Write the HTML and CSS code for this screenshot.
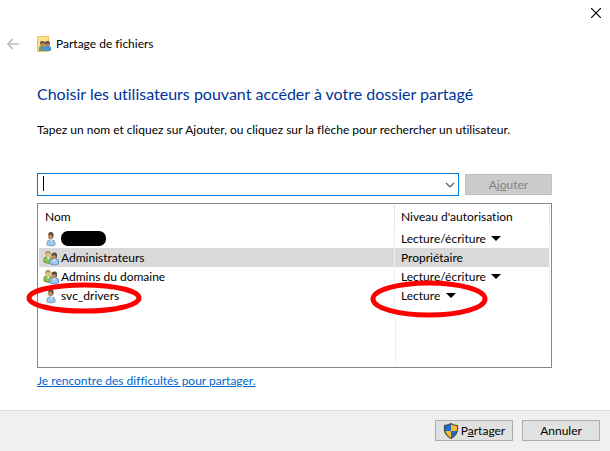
FILE: index.html
```html
<!DOCTYPE html>
<html lang="fr">
<head>
<meta charset="utf-8">
<title>Partage de fichiers</title>
<link rel="stylesheet" href="styles.css">
</head>
<body>
<svg class="symbols" aria-hidden="true">
  <symbol id="user" viewBox="0 0 16 16">
    <path d="M4 14V12Q4 9 7 9H9Q12 9 12 12V14Q8 16 4 14Z" fill="#a3c8ea" stroke="#7ba5cd"/>
    <path d="M7 8L8 11L10 8Z" fill="#eef6fc"/>
    <ellipse cx="7.500" cy="5" rx="2.500" ry="3.500" fill="#b98c66"/>
    <path d="M5.500 4Q5 1 8 1Q11 1 10.500 5.500L9.500 8Q9.500 4 8 3.500Z" fill="#5b4c40"/>
  </symbol>
  <symbol id="group" viewBox="0 0 16 16">
    <path d="M1 12V9Q1 7 3 7H7Q9 7 9 9V13Q4 14 1 12Z" fill="#8cc255" stroke="#5f9a3c"/>
    <path d="M4 7L5 10L7 7Z" fill="#edf5df"/>
    <ellipse cx="5" cy="4.500" rx="2.500" ry="3" fill="#e3bd83"/>
    <path d="M2 5Q2 1 5 1Q8 1 8 5L6.500 3L4 3Z" fill="#b4924a"/>
    <path d="M7 14V11Q7 9 9 9H13Q15.500 9 15.500 11V14Q11 16 7 14Z" fill="#9cc8ee" stroke="#6497c9"/>
    <path d="M10 9L11 12L13 9Z" fill="#eef6fc"/>
    <ellipse cx="11" cy="6.500" rx="2.500" ry="3" fill="#bb8b62"/>
    <path d="M8.500 6Q8 2.500 11.500 2.500Q14.500 2.500 14 6.500L13 9Q13 5.500 11.500 5Z" fill="#554a40"/>
  </symbol>
  <symbol id="arrow" viewBox="0 0 10 5">
    <path d="M0 0H10L5 5Z" fill="#000"/>
  </symbol>
</svg>

<main class="window">
  <div class="caption">
    <button class="close" type="button" aria-label="Fermer">
      <svg width="10" height="10" viewBox="0 0 10 10"><path d="M0 0L10 10M10 0L0 10" stroke="#000" stroke-width="1.200"/></svg>
    </button>
  </div>

  <header class="header">
    <button class="back" type="button" aria-label="Retour" disabled>
      <svg width="12" height="12" viewBox="0 0 12 12"><path d="M12 6H1M6 1L1 6L6 11" fill="none" stroke="#bdbdbd" stroke-width="1.700"/></svg>
    </button>
    <svg class="app-icon" width="16" height="16" viewBox="0 0 16 16" aria-hidden="true">
      <path d="M.5.5H11.500V15.500H.5Z" fill="#fbe18b" stroke="#e7c65a"/>
      <path d="M2 15V12Q2 10 4 10H7Q9 10 9 12V15Z" fill="#5d9a78"/>
      <circle cx="5.500" cy="8" r="2.500" fill="#bd8b50"/>
      <path d="M3 8Q2.500 5 5.500 5Q8 5 8 8L6 7Z" fill="#675637"/>
      <path d="M7 15V12Q7 10 9 10H12Q14 10 14 12V15Z" fill="#4b94d0"/>
      <circle cx="10.500" cy="8" r="2.500" fill="#ad7954"/>
      <path d="M8 8Q7.500 5 10.500 5Q13 5 13 8L11 7Z" fill="#51483d"/>
    </svg>
    <span>Partage de fichiers</span>
  </header>

  <section class="content">
    <h1>Choisir les utilisateurs pouvant accéder à votre dossier partagé</h1>
    <label class="hint" for="account">Tapez un nom et cliquez sur Ajouter, ou cliquez sur la flèche pour rechercher un utilisateur.</label>

    <div class="add-row">
      <div class="combo">
        <input id="account" type="text" autocomplete="off">
        <span class="caret"></span>
        <button type="button" aria-label="Afficher la liste">
          <svg width="10" height="6" viewBox="0 0 10 6"><path d="M1 1L5 5L9 1" fill="none" stroke="#555" stroke-width="1.200"/></svg>
        </button>
      </div>
      <button class="button add" type="button" disabled><span>Aj<u>o</u>uter</span></button>
    </div>

    <div class="list">
      <table>
        <thead>
          <tr><th scope="col">Nom</th><th class="level" scope="col">Niveau d'autorisation</th></tr>
        </thead>
        <tbody>
          <tr>
            <td><div class="cell"><svg class="icon"><use href="#user"/></svg><span class="redacted"></span></div></td>
            <td><div class="cell"><select aria-label="Niveau d'autorisation"><option>Lecture/écriture</option></select><svg class="arrow"><use href="#arrow"/></svg></div></td>
          </tr>
          <tr class="selected">
            <td><div class="cell"><svg class="icon"><use href="#group"/></svg><span>Administrateurs</span></div></td>
            <td><div class="cell">Propriétaire</div></td>
          </tr>
          <tr>
            <td><div class="cell"><svg class="icon"><use href="#group"/></svg><span>Admins du domaine</span></div></td>
            <td><div class="cell"><select aria-label="Niveau d'autorisation pour Admins du domaine"><option>Lecture/écriture</option></select><svg class="arrow"><use href="#arrow"/></svg></div></td>
          </tr>
          <tr>
            <td><div class="cell"><svg class="icon"><use href="#user"/></svg><span>svc_drivers</span>
              <svg class="mark mark-name" viewBox="0 0 116 32" aria-hidden="true"><ellipse cx="58" cy="16" rx="55" ry="13"/></svg></div></td>
            <td><div class="cell"><select aria-label="Niveau d'autorisation pour svc_drivers"><option>Lecture</option></select><svg class="arrow"><use href="#arrow"/></svg>
              <svg class="mark mark-level" viewBox="0 0 118 38" aria-hidden="true"><ellipse cx="59" cy="19" rx="56" ry="16"/></svg></div></td>
          </tr>
        </tbody>
      </table>
      <div class="list-rest"></div>
    </div>

    <a class="help" href="#">Je rencontre des difficultés pour partager.</a>
  </section>

  <footer class="footer">
    <button class="button" type="button">
      <svg width="16" height="16" viewBox="0 0 16 16" aria-hidden="true">
        <path d="M8 0Q5 2 1 2V7Q2 13 8 16Z" fill="#1770cc"/>
        <path d="M8 0Q11 2 15 2V7Q14 13 8 16Z" fill="#fdb92c"/>
        <path d="M1.500 8H8V16Q3 13 1.500 8Z" fill="#fdb92c"/>
        <path d="M14.500 8H8V16Q13 13 14.500 8Z" fill="#1770cc"/>
        <path d="M8 .8Q5 2.500 1.500 2.500V7Q2.500 12.500 8 15.300Q13.500 12.500 14.500 7V2.500Q11 2.500 8 .8Z" fill="none" stroke="#4b4b4b" stroke-width="1.200"/>
      </svg>
      <span>P<u>a</u>rtager</span>
    </button>
    <button class="button" type="button">Annuler</button>
  </footer>
</main>
</body>
</html>
```

FILE: styles.css
```css
* {
  box-sizing: border-box;
}

body {
  margin: 0;
  background: #fff;
  color: #000;
  font: 12px/16px "Segoe UI", Lato, "Open Sans", sans-serif;
  font-variant-ligatures: none;
}

button,
input,
select {
  margin: 0;
  padding: 0;
  border: 0;
  background: none;
  color: inherit;
  font: inherit;
}

svg {
  display: block;
  flex: none;
}

.symbols {
  position: absolute;
  width: 0;
  height: 0;
}

.window {
  display: flex;
  flex-direction: column;
  min-height: 100vh;
}

.caption {
  display: flex;
  justify-content: flex-end;
  padding: 8px 9px 0 0;
}

.close {
  display: flex;
}

.header {
  display: flex;
  align-items: center;
  margin-top: 18px;
  padding-left: 7px;
}

.back {
  display: flex;
  margin-right: 18px;
}

.app-icon {
  margin-right: 3px;
}

.content {
  display: flex;
  flex-direction: column;
  flex: 1;
  padding: 32px 58px 20px 37px;
}

h1 {
  margin: 0;
  color: #003399;
  font-size: 16px;
  font-weight: 400;
  line-height: 20px;
  white-space: nowrap;
}

.hint {
  margin-top: 18px;
  white-space: nowrap;
}

.add-row {
  display: flex;
  align-items: center;
  gap: 6px;
  margin-top: 35px;
}

.combo {
  position: relative;
  display: flex;
  flex: 1;
  height: 23px;
  border: 1px solid #0078d7;
}

.combo input {
  flex: 1;
  min-width: 0;
  padding: 0 5px;
  outline: 0;
}

.combo button {
  display: flex;
  align-items: center;
  padding-right: 3px;
}

.caret {
  position: absolute;
  top: 2px;
  left: 5px;
  width: 1px;
  height: 15px;
  background: #000;
}

.button {
  display: flex;
  align-items: center;
  justify-content: center;
  gap: 2px;
  width: 78px;
  height: 21px;
  border: 1px solid #adadad;
  background: #e1e1e1;
}

.add {
  width: 87px;
  border-color: #bfbfbf;
  background: #cccccc;
  color: #838383;
}

.list {
  display: flex;
  flex-direction: column;
  margin-top: 7px;
  border: 1px solid #828790;
  padding: 1px;
}

table {
  width: 100%;
  border-collapse: collapse;
  table-layout: fixed;
}

th,
td {
  height: 19px;
  padding: 0 0 0 6px;
  text-align: left;
  font-weight: 400;
}

th {
  height: 24px;
  border-right: 1px solid #e5e5e5;
}

.level {
  width: 155px;
}

td {
  border-right: 1px solid #eaf0f7;
}

td:first-child {
  padding-left: 4px;
}

.selected {
  background: #d9d9d9;
}

.cell {
  position: relative;
  display: flex;
  align-items: center;
  gap: 2px;
}

.icon {
  width: 16px;
  height: 16px;
}

.redacted {
  width: 45px;
  height: 15px;
  border-radius: 7px;
  background: #000;
}

select {
  appearance: none;
  padding-right: 15px;
}

.arrow {
  width: 10px;
  height: 5px;
  margin-left: -12px;
  pointer-events: none;
}

.mark {
  position: absolute;
  overflow: visible;
  fill: none;
  stroke: #f00;
  stroke-width: 5px;
  pointer-events: none;
}

.mark-name {
  top: -6px;
  left: -17px;
  width: 116px;
  height: 32px;
}

.mark-level {
  top: -8px;
  left: -31px;
  width: 118px;
  height: 38px;
}

.list-rest {
  height: 61px;
  margin-right: 154px;
  border-right: 1px solid #eaf0f7;
}

.help {
  align-self: flex-start;
  margin-top: 5px;
  color: #0066cc;
}

.footer {
  display: flex;
  justify-content: flex-end;
  gap: 9px;
  padding: 9px 10px 10px;
  border-top: 1px solid #dfdfdf;
  background: #f0f0f0;
}
```
